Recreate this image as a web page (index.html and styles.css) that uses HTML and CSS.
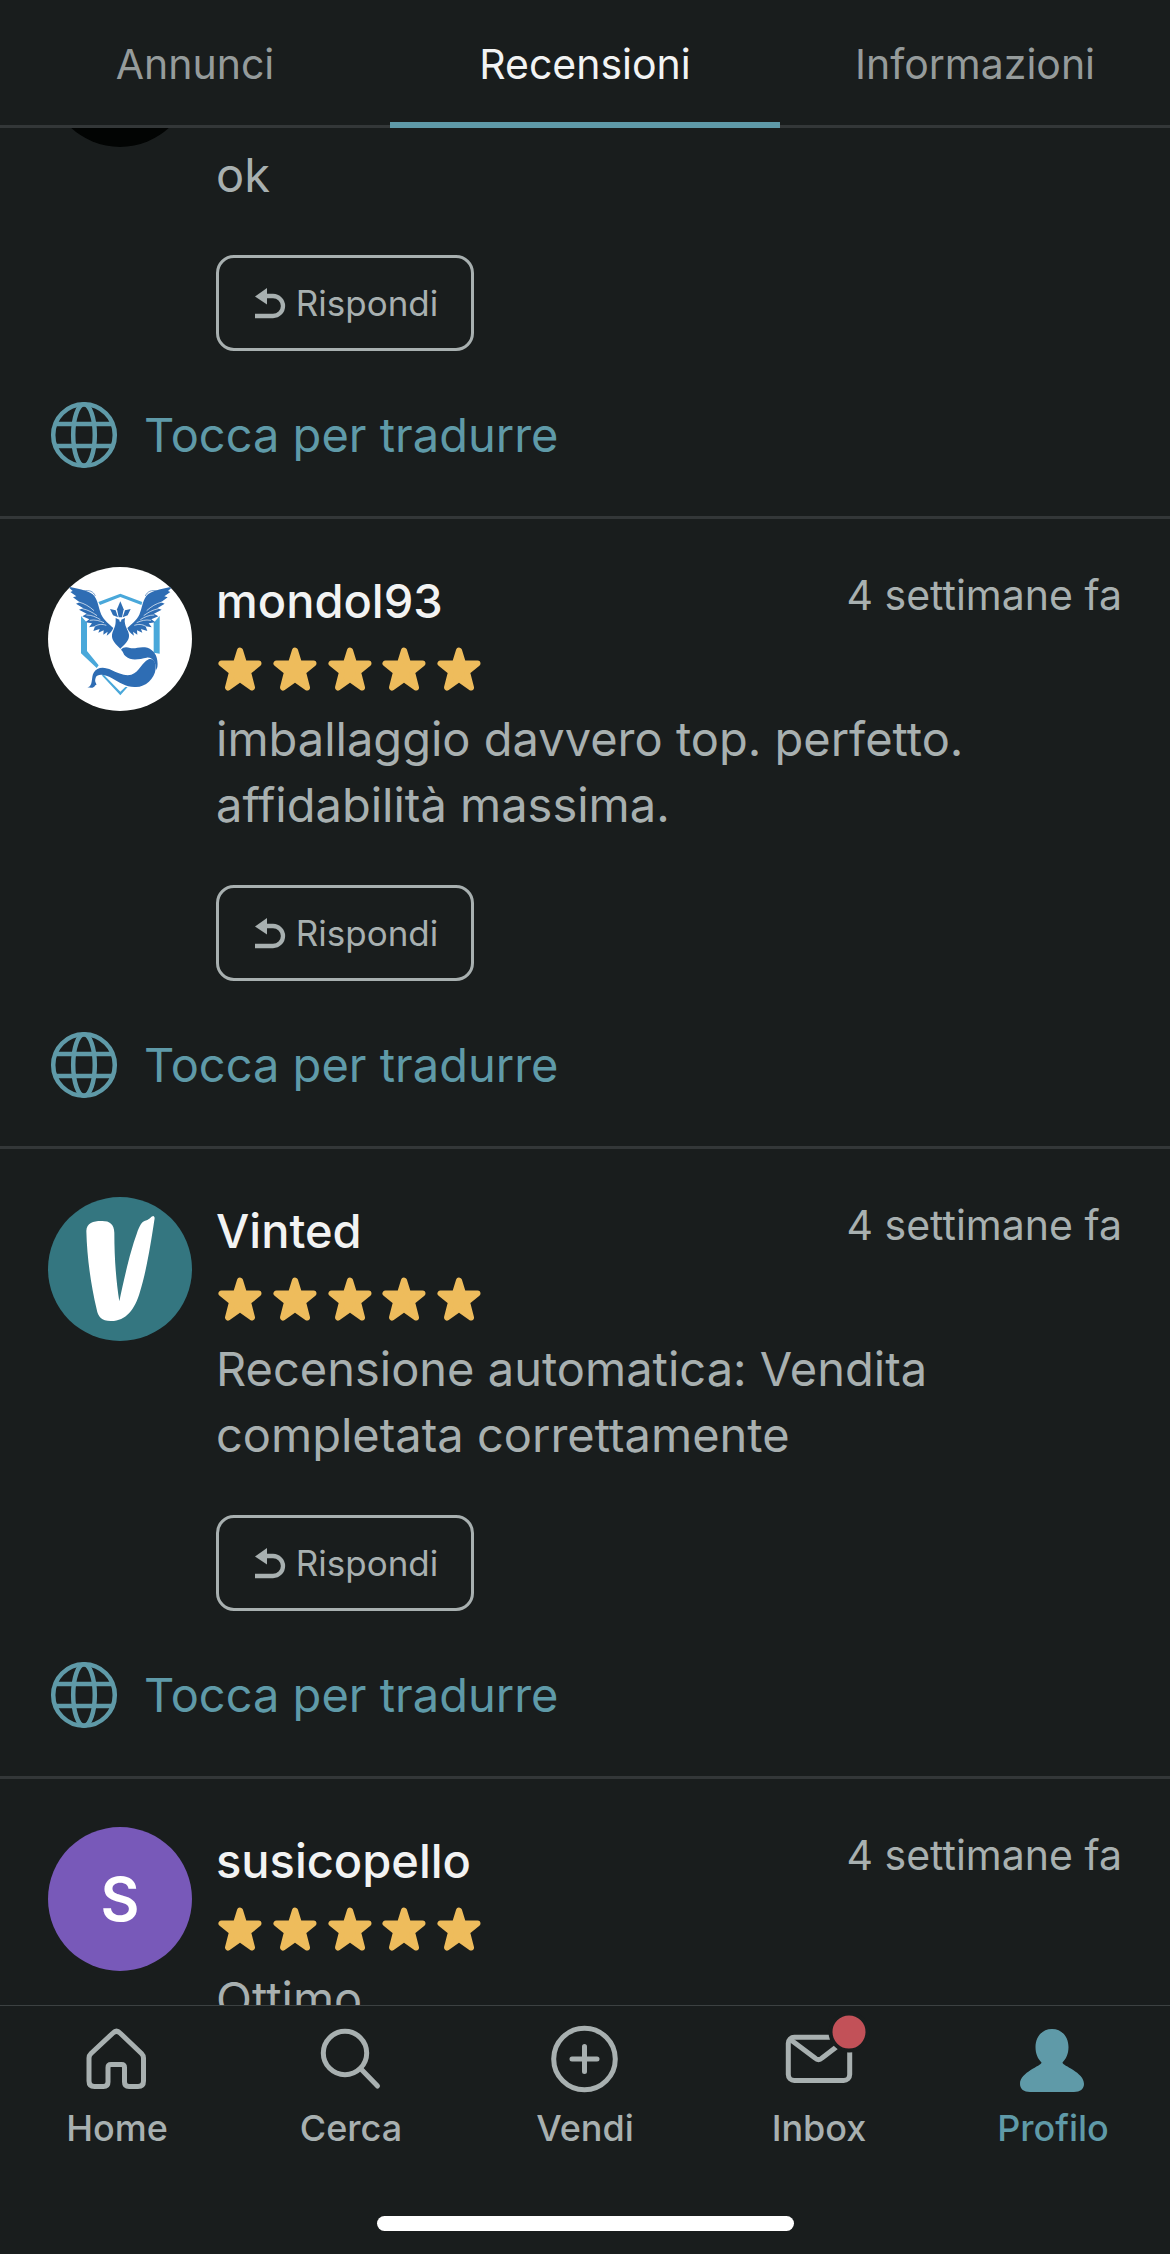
FILE: index.html
```html
<!DOCTYPE html>
<html lang="it">
<head>
    <meta charset="UTF-8">
    <meta name="viewport" content="width=device-width, initial-scale=1">
    <title>Recensioni</title>
    <link rel="stylesheet" href="styles.css">
</head>
<body>
<!-- shared icons -->
<svg class="sprite" aria-hidden="true">
    <symbol id="star" viewBox="0 0 48 48">
        <path d="M24 5.500 L28 18.500 L42.500 18.500 L32 27 L36 42.500 L24 34 L12 42.500 L16 27 L5.500 18.500 L20 18.500 Z" fill="#eebc5c" stroke="#eebc5c" stroke-width="6" stroke-linejoin="round"/>
    </symbol>
    <symbol id="reply" viewBox="0 0 36 36">
        <path d="M3 11.500 L15 3 V19.500 Z" fill="currentColor"/>
        <path d="M13 11 H21 A10 10 0 0 1 21 31 H3" fill="none" stroke="currentColor" stroke-width="4.300"/>
    </symbol>
    <symbol id="globe" viewBox="0 0 72 72">
        <g fill="none" stroke="currentColor" stroke-width="4.500">
            <circle cx="36" cy="36" r="30.800"/>
            <ellipse cx="36" cy="36" rx="10.800" ry="30.800"/>
            <path d="M7.500 25 H64.500 M7.500 47 H64.500"/>
        </g>
    </symbol>
</svg>

<header class="tabs">
    <a class="tab" href="#annunci">Annunci</a>
    <a class="tab active" href="#recensioni">Recensioni</a>
    <a class="tab" href="#informazioni">Informazioni</a>
</header>

<main class="reviews">
    <article class="review scrolled">
        <div class="row">
            <div class="avatar dark"></div>
            <div class="content">
                <p class="text">ok</p>
                <button class="reply" type="button"><svg><use href="#reply"/></svg>Rispondi</button>
            </div>
        </div>
        <a class="translate" href="#traduci"><svg><use href="#globe"/></svg>Tocca per tradurre</a>
    </article>

    <article class="review">
        <div class="row">
            <svg class="avatar" viewBox="54 51 432 432">
                <rect x="54" y="51" width="432" height="432" fill="#fff"/>
                <!-- shield -->
                <g fill="#4aa8da">
                    <path d="M205 156 L271 131 L337 156 L334 165 L271 141 L210 165 Z"/>
                    <path d="M153 198 L171 218 V303 L206 346 L200 354 L153 310 Z"/>
                    <path d="M389 198 L371 218 V308 L389 311 Z"/>
                    <path d="M215 376 L222 375 L271 425 L286 411 L293 411 L271 436 Z"/>
                </g>
                <!-- wings, same shape mirrored -->
                <g id="wing">
                    <path d="M114 110 C140 115 170 119 188 133 C205 148 205 175 214 194 C222 211 239 223 250 234 C246 243 240 251 230 257 L233 245 L220 254 L221 241 L205 248 L209 237 L190 243 L195 229 L177 232 L186 220 L166 217 L178 208 L157 199 L170 191 L147 179 L160 175 L138 161 L149 157 L129 142 L139 139 L121 126 L128 123 Z" fill="#2e6db4"/>
                    <path d="M160 123 C178 119 190 124 196 138" fill="none" stroke="#2e6db4" stroke-width="2"/>
                    <path d="M146 156 C164 161 178 169 192 182 M157 176 C175 180 187 187 201 197 M169 195 C185 195 199 201 211 209 M179 211 C196 208 208 212 222 218 M194 229 C207 222 216 222 229 226" fill="none" stroke="#fff" stroke-width="2"/>
                </g>
                <use href="#wing" transform="translate(542 0) scale(-1 1)"/>
                <!-- body, crest and tail -->
                <g fill="#2e6db4">
                    <path d="M271 154 L281 178 L276 202 H266 L261 178 Z"/>
                    <path d="M240 177 L257 181 L264 202 L249 196 Z M302 177 L285 181 L278 202 L293 196 Z"/>
                    <path d="M257 204 L271 211 L285 204 L284 214 C286 234 294 239 297 254 C299 272 282 284 271 296 C260 284 244 272 246 254 C249 239 257 232 257 214 Z"/>
                    <path d="M273 299 C280 290 290 290 300 294 C316 297 326 290 345 292 C366 295 380 312 382 332 C384 346 382 355 379 360 C378 339 369 321 350 323 C329 327 304 334 287 319 C279 312 280 304 273 299 Z"/>
                    <path d="M172 412 C190 409 183 380 191 368 C201 349 225 350 244 360 C265 370 286 379 304 374 C330 365 334 338 356 328 C371 324 379 339 377 357 C373 387 347 411 318 411 C290 413 268 397 246 385 C226 373 202 370 197 383 C192 398 201 399 199 406 C196 401 194 415 183 413 Z"/>
                </g>
                <circle cx="271" cy="212" r="3" fill="#fff"/>
            </svg>
            <div class="content">
                <div class="meta">
                    <h2 class="name">mondol93</h2>
                    <time class="time">4 settimane fa</time>
                </div>
                <div class="stars" role="img" aria-label="5 stelle">
                    <svg><use href="#star"/></svg><svg><use href="#star"/></svg><svg><use href="#star"/></svg><svg><use href="#star"/></svg><svg><use href="#star"/></svg>
                </div>
                <p class="text">imballaggio davvero top. perfetto. affidabilità massima.</p>
                <button class="reply" type="button"><svg><use href="#reply"/></svg>Rispondi</button>
            </div>
        </div>
        <a class="translate" href="#traduci"><svg><use href="#globe"/></svg>Tocca per tradurre</a>
    </article>

    <article class="review">
        <div class="row">
            <svg class="avatar" viewBox="54 51 432 432">
                <rect x="54" y="51" width="432" height="432" fill="#347680"/>
                <path d="M169 153 C170 129 190 123 213 123 C238 122 252 131 253 158 C253 232 258 301 268 364 C281 301 301 213 320 162 C329 136 336 123 350 121 C360 117 364 108 370 108 C375 110 374 116 373 121 C363 187 350 270 330 335 C315 388 287 424 242 423 C215 423 204 411 200 388 C182 312 171 231 169 153 Z" fill="#fff"/>
            </svg>
            <div class="content">
                <div class="meta">
                    <h2 class="name">Vinted</h2>
                    <time class="time">4 settimane fa</time>
                </div>
                <div class="stars" role="img" aria-label="5 stelle">
                    <svg><use href="#star"/></svg><svg><use href="#star"/></svg><svg><use href="#star"/></svg><svg><use href="#star"/></svg><svg><use href="#star"/></svg>
                </div>
                <p class="text">Recensione automatica: Vendita completata correttamente</p>
                <button class="reply" type="button"><svg><use href="#reply"/></svg>Rispondi</button>
            </div>
        </div>
        <a class="translate" href="#traduci"><svg><use href="#globe"/></svg>Tocca per tradurre</a>
    </article>

    <article class="review">
        <div class="row">
            <div class="avatar letter">S</div>
            <div class="content">
                <div class="meta">
                    <h2 class="name">susicopello</h2>
                    <time class="time">4 settimane fa</time>
                </div>
                <div class="stars" role="img" aria-label="5 stelle">
                    <svg><use href="#star"/></svg><svg><use href="#star"/></svg><svg><use href="#star"/></svg><svg><use href="#star"/></svg><svg><use href="#star"/></svg>
                </div>
                <p class="text">Ottimo</p>
            </div>
        </div>
    </article>
</main>

<footer class="bottom">
    <nav class="nav">
        <a href="#home">
            <svg viewBox="0 0 72 72"><path d="M32 10 Q35.500 6.500 39 10 L60.500 30.500 Q62.500 32.500 62.500 35 V58 Q62.500 63.500 57 63.500 H48 Q43.500 63.500 43.500 59 V44.500 Q43.500 41.500 40.500 41.500 H30 Q27 41.500 27 44.500 V59 Q27 63.500 22.500 63.500 H13.500 Q8 63.500 8 58 V35 Q8 32.500 10 30.500 Z"/></svg>
            Home
        </a>
        <a href="#cerca">
            <svg viewBox="0 0 72 72"><circle cx="30" cy="30" r="21.700"/><path d="M46 46 L62.500 63"/></svg>
            Cerca
        </a>
        <a href="#vendi">
            <svg viewBox="0 0 72 72"><circle cx="35.500" cy="36" r="30.800"/><path d="M35.500 23.500 V48.500 M23 36 H48"/></svg>
            Vendi
        </a>
        <a href="#inbox">
            <svg viewBox="0 0 72 72">
                <rect x="5.300" y="14.300" width="61.400" height="43.200" rx="6"/>
                <path d="M8 17 L32 35 Q35.500 38.500 39 35 L56 22"/>
                <circle class="badge" cx="66" cy="9" r="18.500"/>
            </svg>
            Inbox
        </a>
        <a class="active" href="#profilo">
            <svg viewBox="0 0 72 72"><path class="solid" d="M35 6 C45 6 51.500 14 51.500 24 C51.500 31 49 36 45.500 39.500 C45.500 43 67 49 67 61 C67 66 63 69 57 69 H13 C7 69 3 66 3 61 C3 49 24.500 43 24.500 39.500 C21 36 18.500 31 18.500 24 C18.500 14 25 6 35 6 Z"/></svg>
            Profilo
        </a>
    </nav>
    <div class="indicator"></div>
</footer>
</body>
</html>
```

FILE: styles.css
```css
* { box-sizing: border-box; margin: 0; padding: 0; }
body { background: #191d1d; color: #a8b0b0; font-family: Inter, "Liberation Sans", sans-serif; height: 100vh; display: flex; flex-direction: column; overflow: hidden; }
a { color: inherit; text-decoration: none; }
.sprite { display: none; }

.tabs { display: flex; flex: none; height: 128px; box-shadow: inset 0 -3px #333738; }
.tab { flex: 1; padding-top: 36px; border-bottom: 6px solid transparent; text-align: center; font-size: 41px; line-height: 56px; color: #959b9b; }
.tab.active { color: #f2f3f3; border-bottom-color: #5f9aa8; }

.reviews { flex: 1; min-height: 0; overflow: hidden; }
.review { padding: 48px 48px 45px; border-bottom: 3px solid #333738; }
.row { display: flex; align-items: flex-start; gap: 24px; }
.avatar { flex: none; width: 144px; height: 144px; border-radius: 50%; }
.avatar.dark { background: #020403; }
.avatar.letter { background: #7859b9; color: #fff; font-size: 60px; font-weight: 600; line-height: 144px; text-align: center; }
.content { flex: 1; }
.meta { display: flex; justify-content: space-between; }
.name { font-size: 47px; font-weight: 500; line-height: 68px; color: #f2f3f3; }
.time { font-size: 41px; line-height: 56px; }
.stars { display: flex; justify-content: space-between; align-items: center; width: 267px; height: 71px; padding-bottom: 4px; }
.stars svg { width: 48px; height: 48px; }
.text { max-width: 800px; font-size: 47px; line-height: 66px; }
.reply { display: flex; align-items: center; justify-content: center; gap: 8px; width: 258px; height: 96px; margin-top: 47px; background: none; border: 3px solid #a8b0b0; border-radius: 18px; color: inherit; font-family: inherit; font-size: 35px; cursor: pointer; }
.reply svg { width: 36px; height: 36px; }
.translate { display: flex; align-items: center; gap: 24px; margin-top: 48px; font-size: 47px; line-height: 66px; color: #5f9aa8; }
.translate svg { width: 72px; height: 72px; }

/* first review is partly under the tabs */
.scrolled { padding-top: 0; }
.scrolled .avatar { margin-top: -125px; }
.scrolled .content { padding-top: 14px; }

.bottom { flex: none; border-top: 1px solid #3c4142; padding-bottom: 23px; }
.nav { display: flex; padding-top: 17px; }
.nav a { flex: 1; display: flex; flex-direction: column; align-items: center; gap: 9px; font-size: 36px; font-weight: 500; line-height: 48px; }
.nav svg { width: 72px; height: 72px; overflow: visible; fill: none; stroke: currentColor; stroke-width: 5; stroke-linecap: round; stroke-linejoin: round; }
.nav .active { color: #5f9aa8; }
.nav .solid { fill: currentColor; stroke: none; }
.nav .badge { fill: #c25158; stroke: #191d1d; stroke-width: 4; }
.indicator { width: 417px; max-width: 60%; height: 15px; margin: 64px auto 0; border-radius: 8px; background: #fff; }
```
